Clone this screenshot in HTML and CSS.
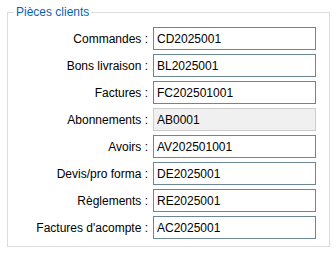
FILE: index.html
```html
<!DOCTYPE html>
<html lang="fr">
<head>
  <meta charset="UTF-8">
  <title>Pièces clients</title>
  <link rel="stylesheet" href="styles.css">
</head>
<body>
  <fieldset class="group">
    <legend>Pièces clients</legend>
    <div class="rows">
      <label for="cmd">Commandes :</label>
      <input id="cmd" type="text" value="CD2025001">
      <label for="bl">Bons livraison :</label>
      <input id="bl" type="text" value="BL2025001">
      <label for="fac">Factures :</label>
      <input id="fac" type="text" value="FC202501001">
      <label for="abo">Abonnements :</label>
      <input id="abo" type="text" value="AB0001" readonly>
      <label for="av">Avoirs :</label>
      <input id="av" type="text" value="AV202501001">
      <label for="dev">Devis/pro forma :</label>
      <input id="dev" type="text" value="DE2025001">
      <label for="reg">Règlements :</label>
      <input id="reg" type="text" value="RE2025001">
      <label for="acp">Factures d'acompte :</label>
      <input id="acp" type="text" value="AC2025001">
    </div>
  </fieldset>
</body>
</html>
```

FILE: styles.css
```css
* {
  box-sizing: border-box;
}

body {
  margin: 0;
  background-color: white;
  font-family: "Liberation Sans", Arial, sans-serif;
  font-size: 12px;
  color: #000;
}

/* cadre du groupe */
.group {
  width: 323px;
  height: 243px;
  margin: 4px 0 0 7px;
  padding: 7px 0 7px 0;
  border: 1px solid #dcdcdc;
}

.group legend {
  margin-left: 6px;
  padding: 0 2px;
  line-height: 16px;
  color: #0a5fb4;
}

.rows {
  display: grid;
  grid-template-columns: 140px 163px;
  grid-auto-rows: 23px;
  column-gap: 5px;
  row-gap: 4px;
}

.rows label {
  align-self: center;
  text-align: right;
  white-space: nowrap;
}

.rows input {
  height: 23px;
  margin: 0;
  padding: 0 0 0 3px;
  border: 1px solid #6b8796;
  font-family: inherit;
  font-size: 12px;
  color: #000;
  background-color: white;
  outline: none;
}

.rows input[readonly] {
  border-color: #cccccc;
  background-color: #f0f0f0;
}
```
